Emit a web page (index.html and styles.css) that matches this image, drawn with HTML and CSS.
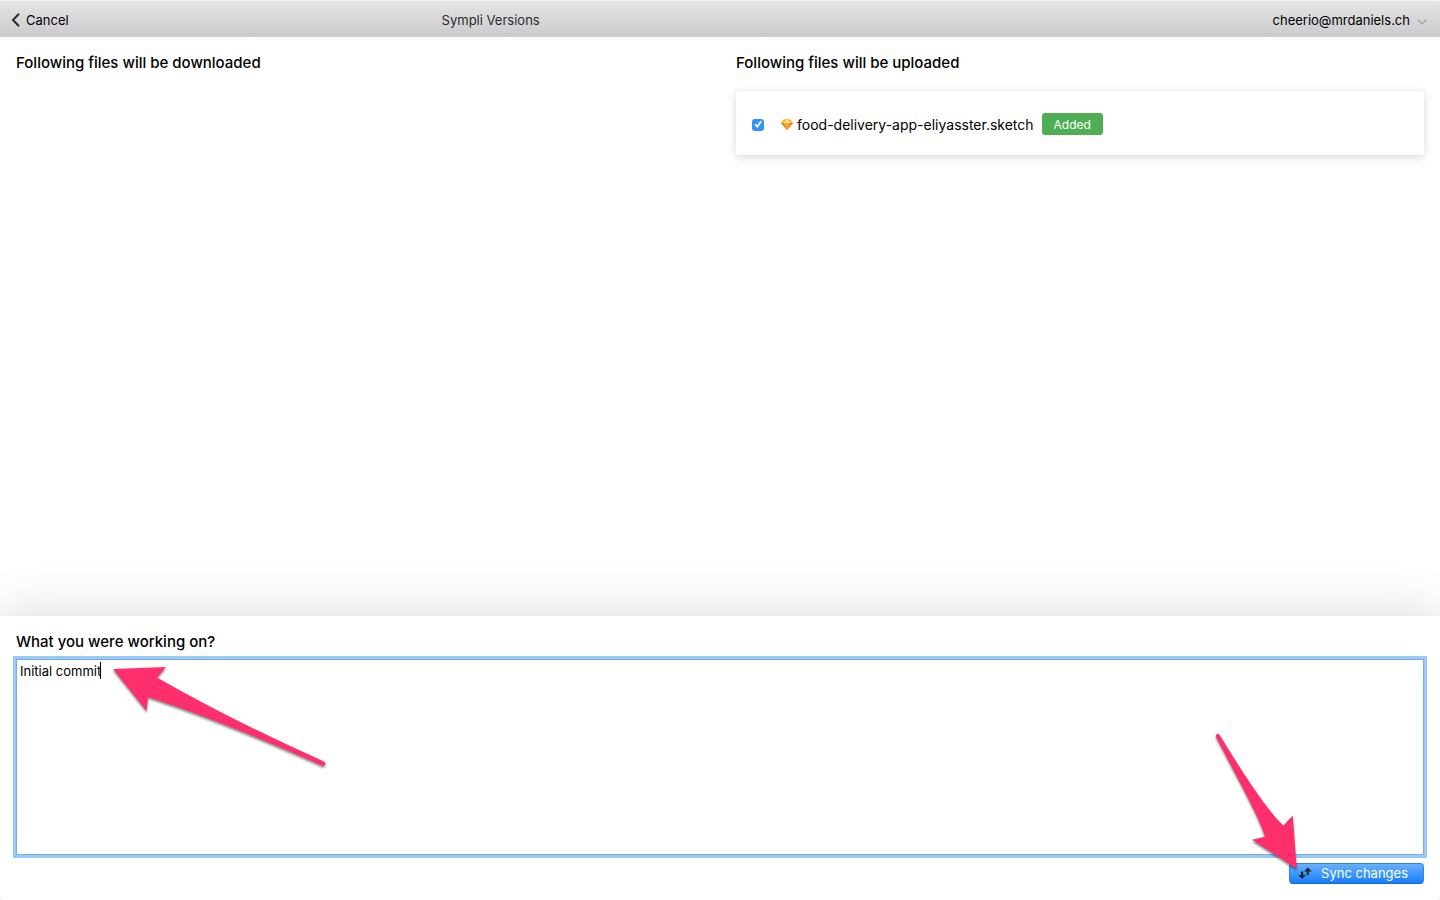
FILE: index.html
```html
<!DOCTYPE html>
<html lang="en">
<head>
<meta charset="utf-8">
<title>Sympli Versions</title>
<link rel="stylesheet" href="styles.css">
</head>
<body>
<div class="window">
  <header class="titlebar">
    <button class="cancel" type="button">
      <svg class="back-icon" width="9" height="14" viewBox="0 0 9 14" aria-hidden="true"><path d="M8 .8 2 7l6 6.200" fill="none" stroke="#2b2b2b" stroke-width="2"/></svg>
      <span>Cancel</span>
    </button>
    <h1 class="title">Sympli Versions</h1>
    <button class="account" type="button">
      <span>cheerio@mrdaniels.ch</span>
      <svg class="account-icon" width="10" height="6" viewBox="0 0 10 6" aria-hidden="true"><path d="M1 .8l4 4 4-4" fill="none" stroke="#929294" stroke-width="1.1"/></svg>
    </button>
  </header>

  <main class="files">
    <section class="column">
      <h2 class="heading">Following files will be downloaded</h2>
    </section>
    <section class="column">
      <h2 class="heading">Following files will be uploaded</h2>
      <div class="card">
        <input class="check" type="checkbox" id="file" checked>
        <label class="file" for="file">
          <svg class="gem" width="12" height="11" viewBox="0 0 24 22" aria-hidden="true">
            <path d="M5 1 12 0l7 1 5 7-12 14L0 8z" fill="#fdad2f"/>
            <path d="M0 8h24L12 22z" fill="#ee7422"/>
            <path d="M5 8h14l-7 14z" fill="#fda52c"/>
            <path d="M12 0 5 8h14z" fill="#feea8b"/>
            <path d="M5 1 0 8h5zM19 1l5 7h-5z" fill="#fdc04a"/>
          </svg>
          <span>food-delivery-app-eliyasster.sketch</span>
        </label>
        <span class="badge">Added</span>
      </div>
    </section>
  </main>

  <form class="commit">
    <label class="heading" for="message">What you were working on?</label>
    <div class="message-box">
      <textarea class="message" id="message">Initial commit</textarea>
      <span class="caret"></span>
      <svg class="arrow arrow-message" width="220" height="110" viewBox="0 0 220 110" aria-hidden="true"><path d="M3 12 56 10 47 20.500Q121 63 214 104.500C217 106 215 109.500 212 108.500Q112 64 38 40L36.500 54z" fill="#ff2f6d"/></svg>
    </div>
    <div class="actions">
      <button class="sync" type="button">
        <svg class="sync-icon" width="14" height="12" viewBox="0 0 14 12" aria-hidden="true"><path d="M3 4.500h2.200v3.500H8l-3.900 4L.3 8H3zM8.600 8V4.500H6L9.800.5l4 4h-3V8z" fill="#252a30"/></svg>
        <span>Sync changes</span>
      </button>
      <svg class="arrow arrow-sync" width="90" height="140" viewBox="0 0 90 140" aria-hidden="true"><path d="M6 7C5 4 8 3 10 5.500Q54 78 73.500 95.500L82.700 85.500 86.700 138.700 42 109.700 55 106.700C49 86 26 46 6 7z" fill="#ff2f6d"/></svg>
    </div>
  </form>
</div>
</body>
</html>
```
FILE: styles.css
```css
* {
  box-sizing: border-box;
}

body {
  margin: 0;
  background: #ececec;
  color: #000;
  font-family: Inter, "Liberation Sans", sans-serif;
  font-size: 13px;
}

button {
  border: 0;
  padding: 0;
  background: none;
  color: inherit;
  font: inherit;
}

.window {
  display: flex;
  flex-direction: column;
  min-height: 100vh;
  border-radius: 4px;
  overflow: hidden;
  background: #fff;
}

.titlebar {
  display: flex;
  align-items: center;
  height: 37px;
  padding: 2px 13px 0 11px;
  border-top: 1px solid #f4f3f4;
  background: linear-gradient(#e6e4e7, #cbcacc);
}

.cancel,
.account {
  display: flex;
  align-items: center;
}

.cancel {
  flex: 33;
  gap: 6px;
}

.title {
  margin: 0;
  font-size: 13px;
  font-weight: 400;
  color: #2b2b2c;
}

.account {
  flex: 68;
  justify-content: flex-end;
  gap: 7px;
}

.account-icon {
  margin-top: 3px;
}

.files {
  flex: 1;
  display: grid;
  grid-template-columns: 1fr 1fr;
}

.column {
  padding: 15px 16px;
}

.heading {
  display: block;
  margin: 0;
  font-size: 15px;
  font-weight: 500;
  line-height: 22px;
}

.card {
  display: flex;
  align-items: center;
  height: 64px;
  margin-top: 17px;
  padding: 3px 16px 0;
  border-radius: 2px;
  background: #fff;
  box-shadow: 0 2px 10px rgba(0, 0, 0, 0.16);
}

.check {
  appearance: none;
  width: 12px;
  height: 12px;
  margin: 0 17px 0 0;
  border-radius: 3px;
  background: #3693f6;
}

.check:checked::before {
  content: "";
  display: block;
  height: 100%;
  background: #fff;
  clip-path: polygon(20% 53%, 31% 43%, 43% 56%, 70% 18%, 83% 27%, 45% 79%);
}

.file {
  display: flex;
  align-items: center;
  gap: 4px;
  font-size: 14px;
}

.badge {
  margin: -2px 0 0 8px;
  padding: 1px 12px 0;
  border-radius: 3px;
  background: #4fae54;
  color: #fff;
  font-size: 12px;
  line-height: 21px;
}

.commit {
  padding: 15px 16px 16px;
  background: #fff;
  box-shadow: 0 0 50px rgba(0, 0, 0, 0.16);
}

.message-box {
  position: relative;
  margin-top: 6px;
}

.message {
  display: block;
  width: 100%;
  height: 196px;
  padding: 3px;
  border: 1px solid #78aee4;
  border-radius: 0;
  outline: 0;
  resize: none;
  box-shadow: 0 0 0 3px #99c9f9;
  color: #000;
  font: inherit;
  line-height: 16px;
}

.caret {
  position: absolute;
  top: 3px;
  left: 84px;
  width: 1px;
  height: 17px;
  background: #000;
}

.arrow {
  position: absolute;
  filter: drop-shadow(0 2px 1px rgba(0, 0, 0, 0.45));
  overflow: visible;
  pointer-events: none;
}

.arrow-message {
  top: -2px;
  left: 94px;
}

.arrow-sync {
  right: 124px;
  bottom: 14px;
}

.actions {
  position: relative;
  display: flex;
  justify-content: flex-end;
  margin-top: 8px;
}

.sync {
  display: flex;
  align-items: center;
  gap: 9px;
  height: 21px;
  padding: 0 15px 1px 8px;
  border: 1px solid #2f83e6;
  border-bottom-color: #1266e0;
  border-radius: 4px;
  background: linear-gradient(#68b1fa, #187df9);
  color: #fff;
}
```
